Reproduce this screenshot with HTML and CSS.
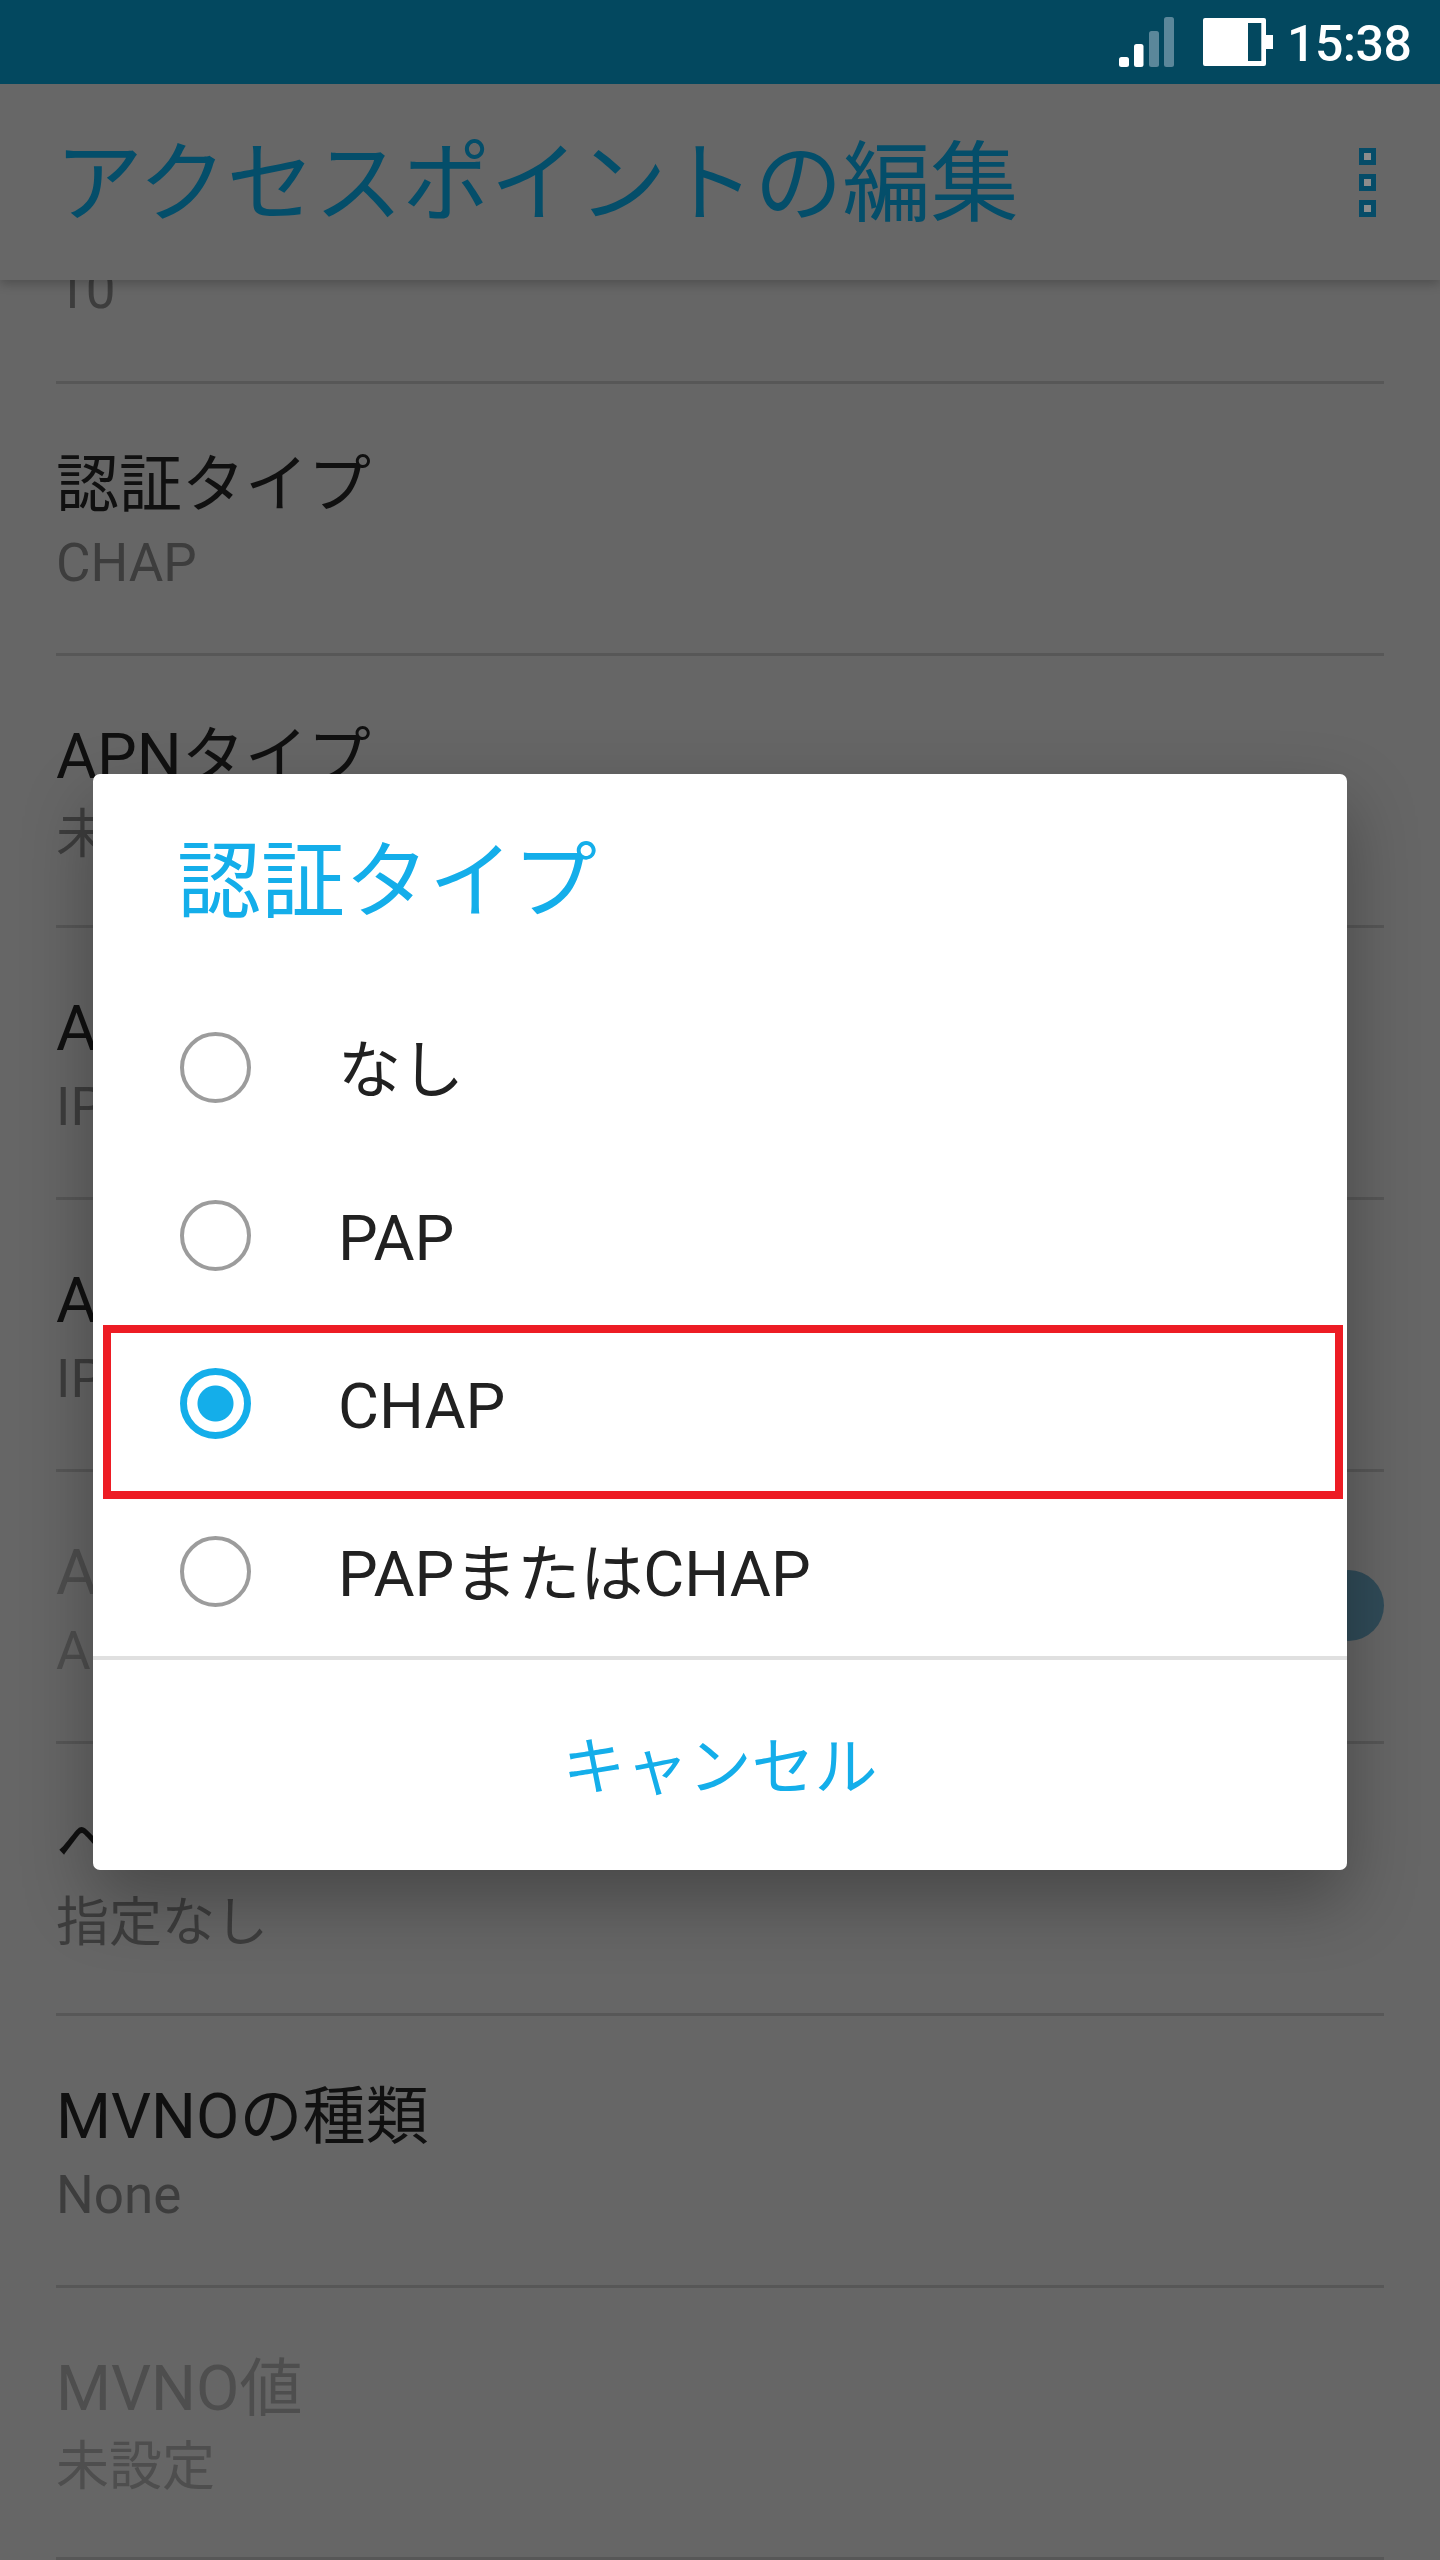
FILE: index.html
```html
<!DOCTYPE html>
<html lang="ja">
<head>
<meta charset="utf-8">
<title>アクセスポイントの編集</title>
<link rel="stylesheet" href="styles.css">
</head>
<body>
<div class="screen">
  <header class="statusbar">
    <svg class="signal" viewBox="0 0 56 50" width="56" height="50" aria-hidden="true">
      <rect class="on" x="0" y="40" width="10" height="10" rx="2.5"/>
      <rect class="on" x="15" y="27" width="9.5" height="23" rx="2.5"/>
      <rect class="off" x="30" y="14" width="10" height="36" rx="2.5"/>
      <rect class="off" x="45" y="0" width="10" height="50" rx="2.5"/>
    </svg>
    <svg class="battery" viewBox="0 0 70 48" width="70" height="48" aria-hidden="true">
      <path class="on" fill-rule="evenodd" d="M2 0H61a2 2 0 0 1 2 2V17H70V31H63V46a2 2 0 0 1-2 2H2a2 2 0 0 1-2-2V2a2 2 0 0 1 2-2ZM45 5V43H58.300V5Z"/>
    </svg>
    <span class="clock">15:38</span>
  </header>

  <div class="appbar">
    <h1 class="appbar-title">アクセスポイントの編集</h1>
    <div class="overflow"><i></i><i></i><i></i></div>
  </div>

  <main class="list">
    <div class="row first"><div class="row-sub">10</div></div>
    <div class="row"><div class="row-title">認証タイプ</div><div class="row-sub">CHAP</div></div>
    <div class="row"><div class="row-title">APNタイプ</div><div class="row-sub">未設定</div></div>
    <div class="row"><div class="row-title">APNプロトコル</div><div class="row-sub">IPv4</div></div>
    <div class="row"><div class="row-title">APNローミングプロトコル</div><div class="row-sub">IPv4</div></div>
    <div class="row disabled">
      <div><div class="row-title">APNの有効化</div><div class="row-sub">APNは有効です</div></div>
      <span class="switch-thumb"></span>
    </div>
    <div class="row"><div class="row-title">ベアラー</div><div class="row-sub">指定なし</div></div>
    <div class="row"><div class="row-title">MVNOの種類</div><div class="row-sub">None</div></div>
    <div class="row disabled"><div><div class="row-title">MVNO値</div><div class="row-sub">未設定</div></div></div>
  </main>

  <section class="dialog">
    <h2 class="dialog-title">認証タイプ</h2>
    <div class="options">
      <div class="option"><span class="radio"></span><span class="option-label">なし</span></div>
      <div class="option"><span class="radio"></span><span class="option-label">PAP</span></div>
      <div class="option"><span class="radio checked"></span><span class="option-label">CHAP</span></div>
      <div class="option"><span class="radio"></span><span class="option-label">PAPまたはCHAP</span></div>
    </div>
    <div class="dialog-action">キャンセル</div>
    <div class="highlight"></div>
  </section>
</div>
</body>
</html>
```
FILE: styles.css
```css
* { box-sizing: border-box; }
html, body { margin: 0; padding: 0; }
body {
  background: #666;
  font-family: Roboto, "Noto Sans CJK JP", sans-serif;
}
.screen {
  position: relative;
  width: 1440px;
  height: 2560px;
  overflow: hidden;
  background: #666;
}

/* status bar */
.statusbar {
  position: relative;
  z-index: 3;
  height: 84px;
  background: #03485f;
  display: flex;
  align-items: flex-start;
  padding: 17px 30px 0 1119px;
  color: #fff;
}
.signal { flex: none; }
.signal .on, .battery .on { fill: #fff; }
.signal .off { fill: #5b879a; }
.battery { flex: none; margin: 1px 0 0 28px; }
.clock {
  margin: 0 0 0 14px;
  font-size: 50px;
  line-height: 54px;
  font-weight: 500;
  letter-spacing: -0.5px;
  white-space: nowrap;
}

/* app bar */
.appbar {
  position: relative;
  z-index: 2;
  height: 196px;
  background: #676767;
  display: flex;
  align-items: center;
  justify-content: space-between;
  padding: 0 64px 0 55px;
  box-shadow: 0 4px 10px rgba(0, 0, 0, .22);
}
.appbar-title {
  margin: 0;
  padding-top: 4px;
  font-size: 88px;
  line-height: 100px;
  font-weight: 400;
  color: #044e6a;
  white-space: nowrap;
}
.overflow {
  display: flex;
  flex-direction: column;
  gap: 9px;
}
.overflow i {
  display: block;
  width: 17px;
  height: 17px;
  border: 5px solid #064c68;
  background: #8c8c8c;
}

/* list */
.list {
  padding: 0 56px;
  margin-top: -168px;
}
.row {
  position: relative;
  height: 272px;
  padding-top: 63px;
  border-bottom: 3px solid #575757;
}
.row.first { padding-top: 138px; }
.row-title {
  font-size: 63px;
  line-height: 76px;
  color: #101010;
  white-space: nowrap;
}
.row-sub {
  font-size: 53px;
  line-height: 80px;
  color: #3d3d3d;
  white-space: nowrap;
}
.row.disabled .row-title,
.row.disabled .row-sub { color: #4e4e4e; }
.switch-thumb {
  position: absolute;
  right: 0;
  top: 98px;
  width: 71px;
  height: 71px;
  border-radius: 50%;
  background: #304b58;
}

/* dialog */
.dialog {
  position: absolute;
  z-index: 4;
  left: 93px;
  top: 774px;
  width: 1254px;
  height: 1096px;
  background: #fff;
  border-radius: 7px;
  box-shadow: 0 30px 70px rgba(0, 0, 0, .3);
  display: flex;
  flex-direction: column;
}
.dialog-title {
  margin: 0;
  height: 209px;
  padding: 59px 0 0 84px;
  font-size: 84px;
  line-height: 100px;
  font-weight: 400;
  color: #14aeea;
}
.options { display: flex; flex-direction: column; }
.option {
  height: 168px;
  display: flex;
  align-items: center;
  gap: 87px;
  padding-left: 87px;
  font-size: 63px;
  line-height: 80px;
  color: #212121;
  white-space: nowrap;
}
.option-label { padding-top: 7px; }
.radio {
  flex: none;
  width: 71px;
  height: 71px;
  border: 4px solid #9c9c9c;
  border-radius: 50%;
  background: #fff;
}
.radio.checked {
  border: 7px solid #14aeea;
  background: radial-gradient(circle closest-side, #14aeea 0, #14aeea 17.500px, #fff 18.500px);
}
.dialog-action {
  margin-top: 1px;
  flex: 1;
  border-top: 4px solid #e0e0e0;
  padding-top: 6px;
  display: flex;
  align-items: center;
  justify-content: center;
  font-size: 63px;
  line-height: 80px;
  color: #14aeea;
}
.highlight {
  position: absolute;
  left: 10px;
  top: 551px;
  width: 1240px;
  height: 174px;
  border: 8px solid #ed1c24;
}
```
